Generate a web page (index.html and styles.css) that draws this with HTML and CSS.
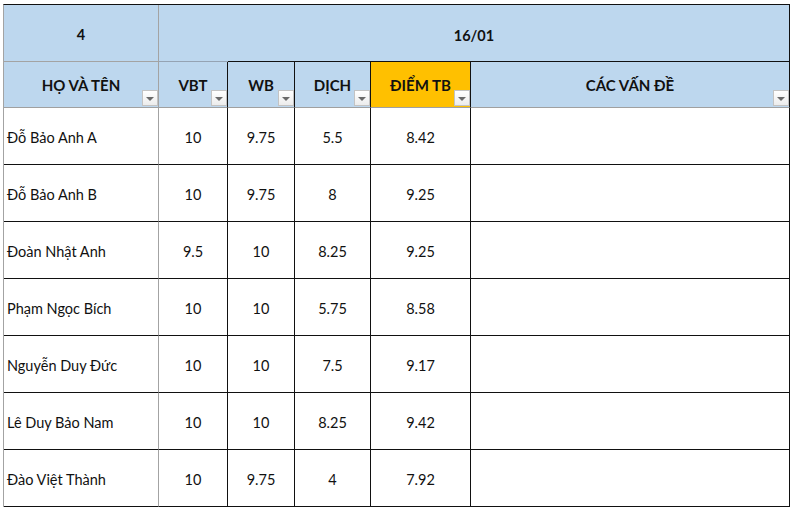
FILE: index.html
```html
<!DOCTYPE html>
<html lang="vi">
<head>
<meta charset="utf-8">
<title>Bảng điểm</title>
<link rel="stylesheet" href="styles.css">
</head>
<body>
<div class="sheet">
  <div class="grid">
    <div class="cell top first">4</div>
    <div class="cell top merged">16/01</div>

    <div class="cell head first">HỌ VÀ TÊN<span class="filter"></span></div>
    <div class="cell head gray-r">VBT<span class="filter"></span></div>
    <div class="cell head">WB<span class="filter"></span></div>
    <div class="cell head">DỊCH<span class="filter"></span></div>
    <div class="cell head accent">ĐIỂM TB<span class="filter"></span></div>
    <div class="cell head">CÁC VẤN ĐỀ<span class="filter"></span></div>

    <div class="cell data name">Đỗ Bảo Anh A</div>
    <div class="cell data">10</div>
    <div class="cell data">9.75</div>
    <div class="cell data">5.5</div>
    <div class="cell data">8.42</div>
    <div class="cell data"></div>

    <div class="cell data name">Đỗ Bảo Anh B</div>
    <div class="cell data">10</div>
    <div class="cell data">9.75</div>
    <div class="cell data">8</div>
    <div class="cell data">9.25</div>
    <div class="cell data"></div>

    <div class="cell data name">Đoàn Nhật Anh</div>
    <div class="cell data">9.5</div>
    <div class="cell data">10</div>
    <div class="cell data">8.25</div>
    <div class="cell data">9.25</div>
    <div class="cell data"></div>

    <div class="cell data name">Phạm Ngọc Bích</div>
    <div class="cell data">10</div>
    <div class="cell data">10</div>
    <div class="cell data">5.75</div>
    <div class="cell data">8.58</div>
    <div class="cell data"></div>

    <div class="cell data name">Nguyễn Duy Đức</div>
    <div class="cell data">10</div>
    <div class="cell data">10</div>
    <div class="cell data">7.5</div>
    <div class="cell data">9.17</div>
    <div class="cell data"></div>

    <div class="cell data name">Lê Duy Bảo Nam</div>
    <div class="cell data">10</div>
    <div class="cell data">10</div>
    <div class="cell data">8.25</div>
    <div class="cell data">9.42</div>
    <div class="cell data"></div>

    <div class="cell data name">Đào Việt Thành</div>
    <div class="cell data">10</div>
    <div class="cell data">9.75</div>
    <div class="cell data">4</div>
    <div class="cell data">7.92</div>
    <div class="cell data"></div>
  </div>
</div>
</body>
</html>
```
FILE: styles.css
```css
html, body {
  margin: 0;
  padding: 0;
  background: #ffffff;
}

body {
  width: 792px;
  height: 509px;
  overflow: hidden;
  font-family: Lato, "Noto Sans", sans-serif;
  color: #111111;
}

.sheet {
  padding: 4px 0 0 3px;
}

.grid {
  display: grid;
  grid-template-columns: 155px 69px 67px 76px 100px 319px;
  grid-template-rows: 57px 46px repeat(7, 57px);
  border-top: 1px solid #111111;
  border-left: 1px solid #a3a3a3;
  width: 786px;
}

.cell {
  position: relative;
  box-sizing: border-box;
  display: flex;
  align-items: center;
  justify-content: center;
  border-right: 1px solid #111111;
  border-bottom: 1px solid #111111;
  font-size: 14.5px;
  padding-top: 3px;
}

.top {
  background: #bdd7ee;
  font-weight: 700;
  font-size: 14.5px;
}

.top.first {
  border-right-color: #a3a3a3;
  border-bottom-color: #a3a3a3;
}

.top.merged {
  grid-column: span 5;
  border-bottom: 0;
  background:
    linear-gradient(to right, #95a3b3 69px, #111111 69px) left bottom / 100% 1px no-repeat,
    #bdd7ee;
}

.head {
  background: #bdd7ee;
  font-weight: 700;
  font-size: 15px;
  border-bottom-color: #a0a0a0;
  padding-top: 1px;
}

.head.first {
  border-right-color: #a3a3a3;
}

.head.accent {
  background: #ffc000;
}

.data {
  background: #ffffff;
}

.data.name {
  justify-content: flex-start;
  padding-left: 3px;
  border-right-color: #a3a3a3;
}

.filter {
  position: absolute;
  right: 0;
  bottom: 1px;
  width: 16px;
  height: 16px;
  box-sizing: border-box;
  border: 1px solid #c3c3c3;
  background: linear-gradient(#ffffff, #ececec);
}

.filter::after {
  content: "";
  position: absolute;
  left: 3px;
  top: 6px;
  width: 0;
  height: 0;
  border-left: 4px solid transparent;
  border-right: 4px solid transparent;
  border-top: 4px solid #6a6a6a;
}
```
